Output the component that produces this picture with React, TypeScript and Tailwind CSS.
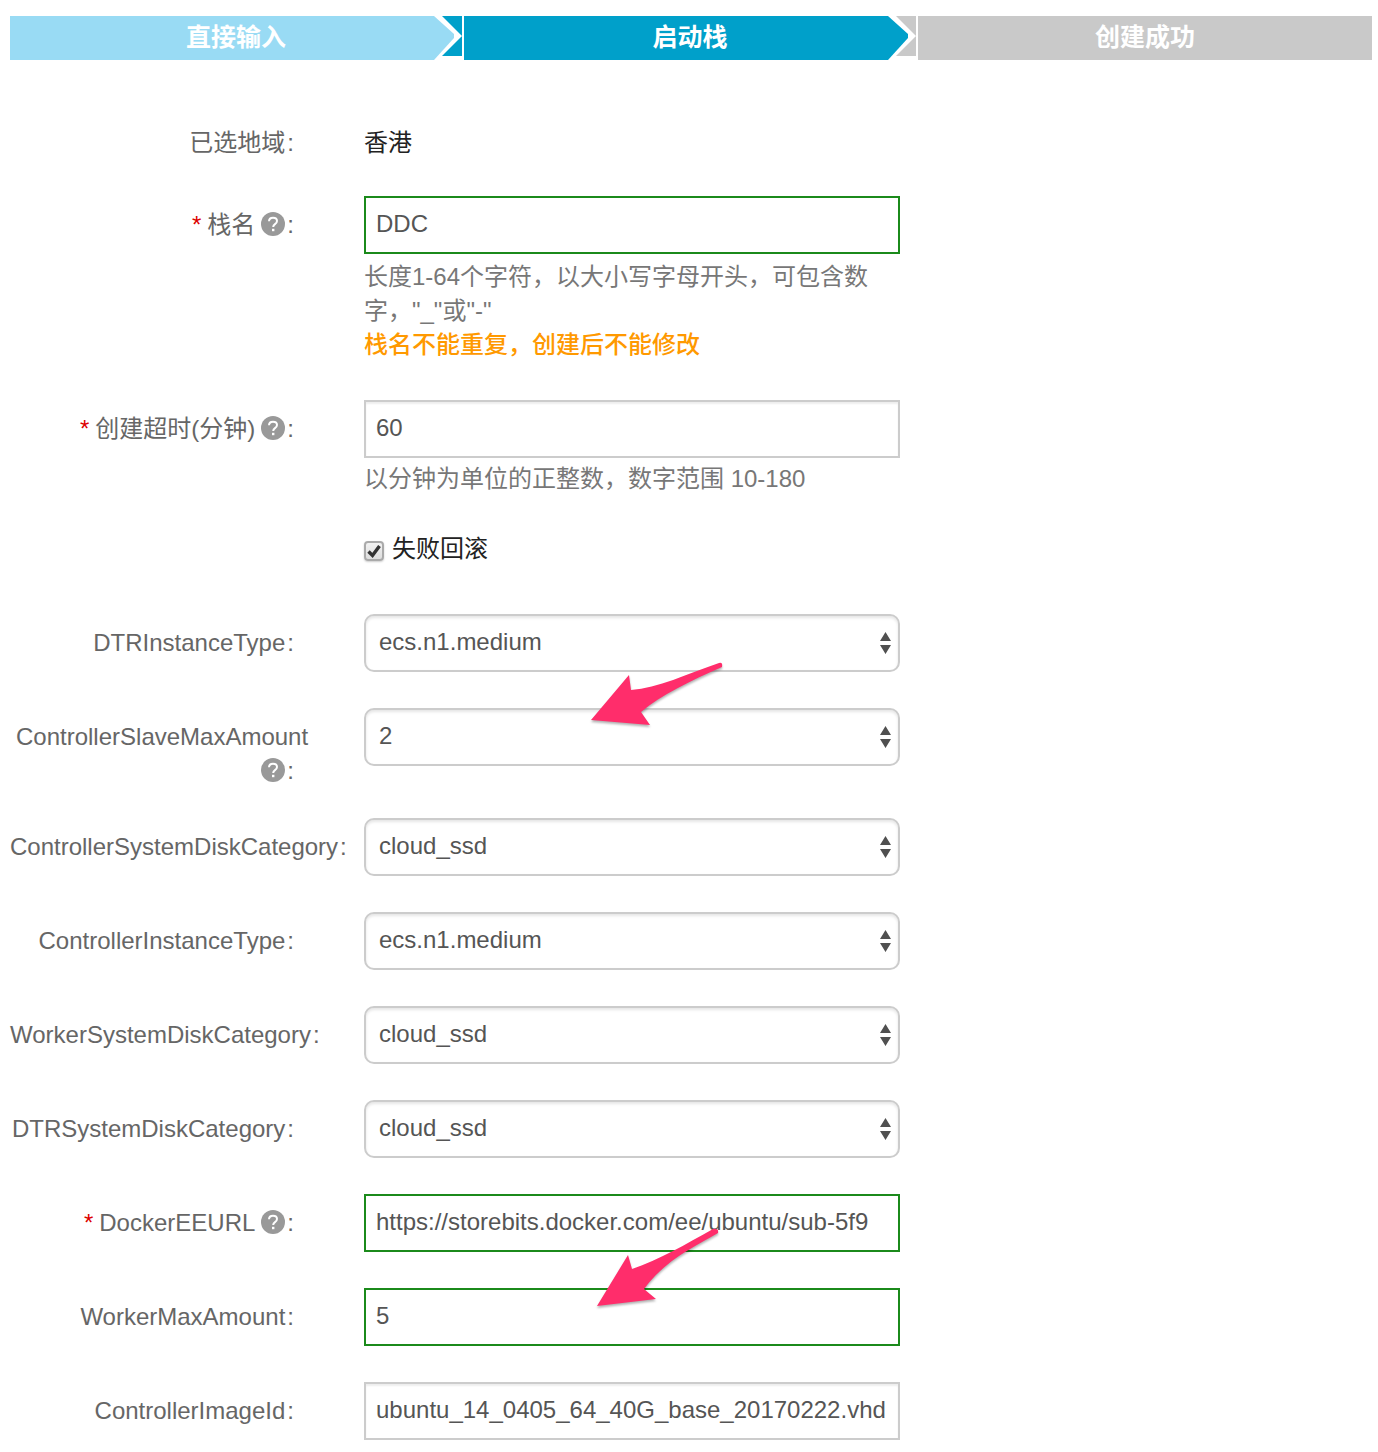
import React, { useState } from 'react'

const regions = { label: '已选地域', value: '香港' }

const StepArrow: React.FC<{ color: string; next: string }> = ({ color, next }) => (
  <svg viewBox="0 0 28 44" className="h-11 w-7 shrink-0" aria-hidden="true">
    <rect width="28" height="44" fill="#fff" />
    <path d="M8 0H28V40H8L28 20Z" fill={next} />
    <path d="M0 0L20 18V22L0 44Z" fill={color} />
  </svg>
)

const HelpIcon: React.FC = () => (
  <svg viewBox="0 0 24 24" className="ml-1.5 inline-block h-6 w-6 align-[-3px]" aria-hidden="true">
    <circle cx="12" cy="12" r="12" fill="#999" />
    <path
      d="M8 9.2C8.1 6.9 9.7 5.7 12 5.7C14.4 5.7 16 7 16 9C16 10.6 15.1 11.3 14 12.1C12.8 13 12.2 13.5 12.2 15"
      fill="none"
      stroke="#fff"
      strokeWidth="2"
    />
    <rect x="11" y="16.8" width="2.4" height="2.4" fill="#fff" />
  </svg>
)

const Arrow: React.FC<{ d: string; className: string }> = ({ d, className }) => (
  <svg
    viewBox="0 0 136 84"
    className={`pointer-events-none absolute h-[84px] w-[136px] drop-shadow-[0_2px_1px_rgba(0,0,0,0.3)] ${className}`}
    aria-hidden="true"
  >
    <path d={d} fill="#ff2d6b" />
  </svg>
)

type RowProps = {
  id?: string
  label?: string
  required?: boolean
  help?: boolean
  children: React.ReactNode
}

const Row: React.FC<RowProps> = ({ id, label, required, help, children }) => (
  <div className="grid grid-cols-[284px_minmax(0,536px)] gap-x-[70px]">
    {label ? (
      <label
        htmlFor={id}
        className={`-mb-0.5 pt-3 text-right text-[#666] ${help && !required ? 'pl-1.5' : ''}`}
      >
        {required && <span className="mr-1.5 text-[#d00]">*</span>}
        {label}
        {help && (
          <>
            <wbr />
            <HelpIcon />
          </>
        )}
        <span className="ml-0.5">:</span>
      </label>
    ) : (
      <span />
    )}
    <div className="relative pb-1">{children}</div>
  </div>
)

const TextField: React.FC<{ id: string; value: string; valid?: boolean }> = ({ id, value, valid }) => {
  const [text, setText] = useState(value)
  return (
    <input
      id={id}
      type="text"
      value={text}
      onChange={(e) => setText(e.target.value)}
      className={`block h-[58px] w-full border-2 bg-white pr-1 pb-0.5 pl-2.5 text-[#555] outline-none ${
        valid ? 'border-[#1b8a1b]' : 'border-[#ccc] shadow-[inset_0_2px_2px_rgba(0,0,0,0.07)]'
      }`}
    />
  )
}

const SelectField: React.FC<{ id: string; options: string[] }> = ({ id, options }) => (
  <div className="relative">
    <select
      id={id}
      className="block h-[58px] w-full appearance-none rounded-[10px] border-2 border-[#ccc] bg-white pb-0.5 pl-[13px] text-[#555] shadow-[inset_0_2px_3px_rgba(0,0,0,0.1)] outline-none"
    >
      {options.map((o) => (
        <option key={o}>{o}</option>
      ))}
    </select>
    <svg
      viewBox="0 0 12 22"
      className="pointer-events-none absolute top-[18px] right-2 h-[22px] w-3"
      aria-hidden="true"
    >
      <path d="M5.5 0L11 9H0ZM5.5 22L11 13H0Z" fill="#505050" />
    </svg>
  </div>
)

const App: React.FC = () => {
  const [rollback, setRollback] = useState(true)

  return (
    <div className="bg-white pt-4 pr-1.5 pb-3 pl-2.5 font-['Liberation_Sans','Noto_Sans_CJK_SC',sans-serif] text-2xl leading-[34px] text-[#333]">
      {/* Steps */}
      <ol className="grid grid-cols-3 text-[25px] leading-[42px] font-bold text-white">
        <li className="mr-0.5 flex h-11 bg-[#99dbf4]">
          <span className="flex-1 pl-7 text-center">直接输入</span>
          <StepArrow color="#99dbf4" next="#00a0ca" />
        </li>
        <li className="mr-0.5 flex h-11 bg-[#00a0ca]">
          <span className="flex-1 pl-7 text-center">启动栈</span>
          <StepArrow color="#00a0ca" next="#c9c9c9" />
        </li>
        <li className="h-11 bg-[#c9c9c9] text-center">创建成功</li>
      </ol>

      {/* Form */}
      <form className="mt-[54px] flex flex-col gap-8">
        <Row label={regions.label}>
          <p className="pt-3 text-[#222]">{regions.value}</p>
        </Row>

        <Row id="name" label="栈名" required help>
          <TextField id="name" value="DDC" valid />
          <p className="mt-1.5 text-[#777]">长度1-64个字符，以大小写字母开头，可包含数字，"_"或"-"</p>
          <p className="pb-0.5 font-medium text-[#f90]">栈名不能重复，创建后不能修改</p>
        </Row>

        <Row id="timeout" label="创建超时(分钟)" required help>
          <TextField id="timeout" value="60" />
          <p className="mt-1 text-[#777]">以分钟为单位的正整数，数字范围 10-180</p>
        </Row>

        <Row>
          <label className="flex items-center gap-2 pb-3 text-[#222]">
            <span className="relative top-0.5 flex">
              <input
                type="checkbox"
                checked={rollback}
                onChange={(e) => setRollback(e.target.checked)}
                className="h-5 w-5 appearance-none rounded border-2 border-[#aaa] bg-linear-to-b from-[#f2f2f2] to-[#dedede] shadow-[0_1px_2px_rgba(0,0,0,0.2)]"
              />
              {rollback && (
                <svg viewBox="0 0 20 20" className="pointer-events-none absolute h-5 w-5" aria-hidden="true">
                  <path d="M4.5 10.5L8.5 14.5L15.5 5" fill="none" stroke="#333" strokeWidth="3.4" />
                </svg>
              )}
            </span>
            失败回滚
          </label>
        </Row>

        <Row id="dtr-type" label="DTRInstanceType">
          <SelectField id="dtr-type" options={['ecs.n1.medium']} />
        </Row>

        <Row id="slave-max" label="ControllerSlaveMaxAmount" help>
          <SelectField id="slave-max" options={['2']} />
          <Arrow
            className="-top-12 left-[226px]"
            d="M1 60L39 15L41 30C68 28 97 14 129 3Q133 2 132 7C100 21 71 35 51 52L60 65Z"
          />
        </Row>

        <Row id="controller-disk" label="ControllerSystemDiskCategory">
          <SelectField id="controller-disk" options={['cloud_ssd']} />
        </Row>

        <Row id="controller-type" label="ControllerInstanceType">
          <SelectField id="controller-type" options={['ecs.n1.medium']} />
        </Row>

        <Row id="worker-disk" label="WorkerSystemDiskCategory">
          <SelectField id="worker-disk" options={['cloud_ssd']} />
        </Row>

        <Row id="dtr-disk" label="DTRSystemDiskCategory">
          <SelectField id="dtr-disk" options={['cloud_ssd']} />
        </Row>

        <Row id="docker-url" label="DockerEEURL" required help>
          <TextField id="docker-url" value="https://storebits.docker.com/ee/ubuntu/sub-5f9" valid />
        </Row>

        <Row id="worker-max" label="WorkerMaxAmount">
          <TextField id="worker-max" value="5" valid />
          <Arrow
            className="-top-[60px] left-[232px]"
            d="M1 78L32 27L36 41C63 32 90 16 117 1Q123 0 122 5C98 19 68 33 48 61L60 71Z"
          />
        </Row>

        <Row id="image-id" label="ControllerImageId">
          <TextField id="image-id" value="ubuntu_14_0405_64_40G_base_20170222.vhd" />
        </Row>
      </form>
    </div>
  )
}

export default App
